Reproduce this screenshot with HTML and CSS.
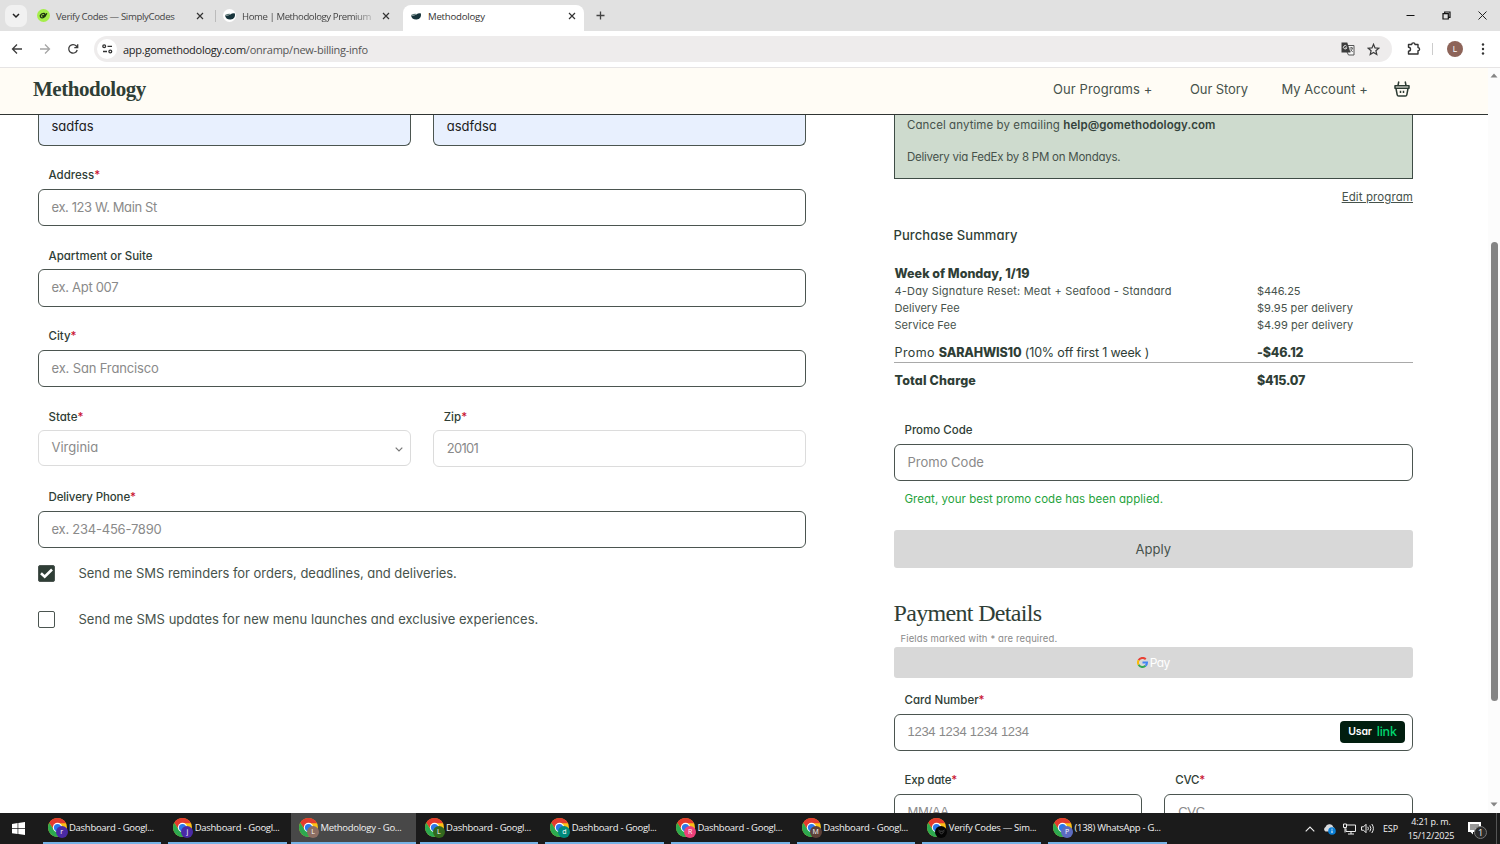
FILE: index.html
```html
<!DOCTYPE html>
<html lang="en">
<head>
    <meta charset="UTF-8">
    <meta name="viewport" content="width=device-width, initial-scale=1.0">
    <title>Methodology</title>
    <link rel="stylesheet" href="styles.css">
</head>
<body>

    <!-- Shared icons -->
    <svg class="defs" width="0" height="0">
        <symbol id="chrome" viewBox="0 0 20 20">
            <circle cx="10" cy="10" r="10" fill="#fbc116"/>
            <path d="M10 5.4H18.9A10 10 0 0 0 1.34 5L6 12.3Z" fill="#e33b2e"/>
            <path d="M1.34 5A10 10 0 0 0 10 20L14 12.3L6 12.3Z" fill="#2da94f"/>
            <circle cx="10" cy="10" r="4.9" fill="#fff"/>
            <circle cx="10" cy="10" r="3.8" fill="#2b78ea"/>
        </symbol>
        <symbol id="close" viewBox="0 0 8 8">
            <path d="M1 1L7 7M7 1L1 7" fill="none" stroke="currentColor" stroke-width="1.2"/>
        </symbol>
        <symbol id="bowl" viewBox="0 0 12 12">
            <path d="M1 5.2Q4 6 6.3 4.6Q8.5 2.6 11 3.4Q11.6 8.8 6.6 9.4Q1.6 9.6 1 5.2Z" fill="#17343b"/>
            <path d="M1 5Q4 3.4 7 4Q4 6 1 5Z" fill="#5d7776"/>
        </symbol>
    </svg>

    <!-- Browser tabs -->
    <div class="tab-strip">
        <div class="tab-search">
            <svg width="8" height="6" viewBox="0 0 8 6"><path d="M1 1L4 4L7 1" fill="none" stroke="#222" stroke-width="1.5"/></svg>
        </div>
        <div class="tab tab-first">
            <svg width="13" height="13" viewBox="0 0 13 13"><circle cx="6.5" cy="6.5" r="6.5" fill="#a5ee4b"/><path d="M8.2 4.6Q4.5 3.6 3.3 6.600Q3.200 9.400 6 8.700Q8.400 7.600 9.800 4.200M4.800 6.500L6.200 7.400L8.300 5" fill="none" stroke="#1d3210" stroke-width="1.3"/></svg>
            <span class="tab-title">Verify Codes — SimplyCodes</span>
            <svg class="tab-close" width="8" height="8"><use href="#close"/></svg>
        </div>
        <div class="tab tab-second">
            <span class="favicon"><svg width="12" height="12"><use href="#bowl"/></svg></span>
            <span class="tab-title tab-fade">Home | Methodology Premium</span>
            <svg class="tab-close" width="8" height="8"><use href="#close"/></svg>
        </div>
        <div class="tab tab-active">
            <span class="favicon"><svg width="12" height="12"><use href="#bowl"/></svg></span>
            <span class="tab-title">Methodology</span>
            <svg class="tab-close" width="8" height="8"><use href="#close"/></svg>
        </div>
        <svg class="new-tab" width="9" height="9" viewBox="0 0 9 9"><path d="M4.5 0.5V8.5M0.5 4.5H8.5" stroke="#444" stroke-width="1.3"/></svg>
        <div class="window-buttons">
            <svg width="9" height="9" viewBox="0 0 9 9"><path d="M0.5 4.5H8.5" stroke="#111"/></svg>
            <svg width="9" height="9" viewBox="0 0 9 9"><path d="M1 2.7H6.3V8H1ZM2.7 2.7V1H8V6.3H6.3" fill="none" stroke="#111" stroke-width="1.2"/></svg>
            <svg width="9" height="9" viewBox="0 0 9 9"><path d="M0.5 0.5L8.5 8.5M8.5 0.5L0.5 8.5" stroke="#222"/></svg>
        </div>
    </div>

    <!-- Browser toolbar -->
    <div class="toolbar">
        <svg width="12" height="12" viewBox="0 0 12 12"><path d="M11 6H2M6 1.5L1.5 6L6 10.5" fill="none" stroke="#3c3c3c" stroke-width="1.3"/></svg>
        <svg width="12" height="12" viewBox="0 0 12 12"><path d="M1 6H10M6 1.5L10.5 6L6 10.5" fill="none" stroke="#a6a6a6" stroke-width="1.3"/></svg>
        <svg width="12" height="12" viewBox="0 0 12 12"><path d="M10.2 7A4.3 4.3 0 1 1 9.3 3L10.6 4.5M10.7 1.2V4.6H7.3" fill="none" stroke="#3c3c3c" stroke-width="1.3"/></svg>
        <div class="address-bar">
            <span class="site-info">
                <svg width="11" height="10" viewBox="0 0 11 10" fill="none" stroke="#333" stroke-width="1.3"><circle cx="2.2" cy="2.3" r="1.4"/><path d="M5.5 2.3H10M1 7.5H5"/><circle cx="8.3" cy="7.5" r="1.4"/></svg>
            </span>
            <span class="url"><span class="url-host">app.gomethodology.com</span>/onramp/new-billing-info</span>
            <svg class="translate" width="14" height="14" viewBox="0 0 14 14"><path d="M6 3.5H13V13H7.5L6 10" fill="#f5f5f5" stroke="#555"/><path d="M0.5 0.5H6.300L9.500 10.500H0.500Z" fill="#3c3c3c"/><path d="M5.600 4.300A1.700 1.700 0 1 0 5.800 5.800H4.300" fill="none" stroke="#fff" stroke-width="0.900"/><path d="M8.500 6H12M10.300 5V6M11.500 6Q11 8.500 9.200 9.500M9.500 7.500L11.700 10" fill="none" stroke="#555" stroke-width="0.900"/></svg>
            <svg class="star" width="13" height="13" viewBox="0 0 13 13"><path d="M6.5 1.3L8 4.9L11.8 5.2L8.9 7.7L9.8 11.5L6.5 9.5L3.2 11.5L4.1 7.7L1.2 5.2L5 4.9Z" fill="none" stroke="#3c3c3c" stroke-width="1.2"/></svg>
        </div>
        <svg class="puzzle" width="14" height="14" viewBox="0 0 14 14"><path d="M1.5 2.5H4.7A1.6 1.6 0 0 1 8 2.5H11V5.6A1.5 1.5 0 0 1 11 8.7V12H1.5V9.2A2 2 0 0 0 1.5 5.2Z" fill="none" stroke="#333" stroke-width="1.4" stroke-linejoin="round"/></svg>
        <span class="toolbar-line"></span>
        <span class="avatar">L</span>
        <svg class="dots" width="4" height="12" viewBox="0 0 4 12" fill="#333"><circle cx="2" cy="1.5" r="1.2"/><circle cx="2" cy="6" r="1.2"/><circle cx="2" cy="10.5" r="1.2"/></svg>
    </div>

    <!-- Web page -->
    <div class="viewport">
        <div class="page">
            <header class="site-header">
                <div class="logo">Methodology</div>
                <nav class="site-nav">
                    <a class="nav-programs">Our Programs +</a>
                    <a class="nav-story">Our Story</a>
                    <a class="nav-account">My Account +</a>
                    <svg width="16" height="16" viewBox="0 0 16 16" fill="none" stroke="#2c3b33" stroke-width="1.500"><path d="M1 4.800H15V7.200H1Z" stroke-linejoin="round"/><path d="M2 7.500L3.200 13.800Q3.400 15 4.600 15H11.400Q12.600 15 12.800 13.800L14 7.500M4.800 0.500L4 4.500M11.200 0.500L12 4.500"/><path d="M6.500 9.700V12M9.500 9.700V12"/></svg>
                </nav>
            </header>

            <main class="content">
                <!-- Delivery form -->
                <section class="delivery">
                    <div class="row names">
                        <div class="input filled"><span>sadfas</span></div>
                        <div class="input filled"><span>asdfdsa</span></div>
                    </div>
                    <div class="field">
                        <label>Address<i>*</i></label>
                        <div class="input"><span class="t-address">ex. 123 W. Main St</span></div>
                    </div>
                    <div class="field">
                        <label>Apartment or Suite</label>
                        <div class="input"><span class="t-apt">ex. Apt 007</span></div>
                    </div>
                    <div class="field">
                        <label>City<i>*</i></label>
                        <div class="input"><span class="t-city">ex. San Francisco</span></div>
                    </div>
                    <div class="row">
                        <div class="field">
                            <label>State<i>*</i></label>
                            <div class="input disabled select">
                                <span>Virginia</span>
                                <svg width="8" height="5" viewBox="0 0 8 5"><path d="M0.7 0.7L4 4L7.3 0.7" fill="none" stroke="#777" stroke-width="1.2"/></svg>
                            </div>
                        </div>
                        <div class="field">
                            <label>Zip<i>*</i></label>
                            <div class="input disabled"><span class="t-zip">20101</span></div>
                        </div>
                    </div>
                    <div class="field">
                        <label><span class="l-phone">Delivery Phone</span><i>*</i></label>
                        <div class="input"><span class="t-phone">ex. 234-456-7890</span></div>
                    </div>
                    <div class="check-row">
                        <span class="checkbox checked"><svg width="13" height="11" viewBox="0 0 13 11"><path d="M1 5.3L4.7 8.7L12 1.5" fill="none" stroke="#fff" stroke-width="2.6"/></svg></span>
                        <span class="c-reminders">Send me SMS reminders for orders, deadlines, and deliveries.</span>
                    </div>
                    <div class="check-row">
                        <span class="checkbox"></span>
                        <span class="c-updates">Send me SMS updates for new menu launches and exclusive experiences.</span>
                    </div>
                </section>

                <!-- Order summary -->
                <section class="summary">
                    <div class="program">
                        <p class="p-cancel">Cancel anytime by emailing <b>help@gomethodology.com</b></p>
                        <p class="p-delivery">Delivery via FedEx by 8 PM on Mondays.</p>
                    </div>
                    <a class="edit">Edit program</a>
                    <h2>Purchase Summary</h2>
                    <div class="line week"><b>Week of Monday, 1/19</b></div>
                    <div class="line small"><span class="s-item">4-Day Signature Reset: Meat + Seafood - Standard</span><span class="s-price">$446.25</span></div>
                    <div class="line small"><span>Delivery Fee</span><span>$9.95 per delivery</span></div>
                    <div class="line small"><span>Service Fee</span><span>$4.99 per delivery</span></div>
                    <div class="line promo"><span><span class="s-promo">Promo </span><b>SARAHWIS10</b><span class="s-off"> (10% off first 1 week )</span></span><b>-$46.12</b></div>
                    <div class="line total"><b>Total Charge</b><b class="s-total">$415.07</b></div>

                    <div class="promo-form">
                        <label>Promo Code</label>
                        <div class="input"><span>Promo Code</span></div>
                        <p class="success">Great, your best promo code has been applied.</p>
                        <div class="button"><span>Apply</span></div>
                    </div>

                    <h1>Payment Details</h1>
                    <p class="required">Fields marked with * are required.</p>
                    <div class="button gpay">
                        <svg width="11" height="11" viewBox="0 0 22 22" fill="none" stroke-width="4">
                            <path d="M17.5 4.5A9 9 0 0 0 3.2 6.5" stroke="#e94235"/>
                            <path d="M3.2 6.5A9 9 0 0 0 3.2 15.5" stroke="#fabb05"/>
                            <path d="M3.2 15.5A9 9 0 0 0 17 17.7" stroke="#34a853"/>
                            <path d="M17 17.7A9 9 0 0 0 20 11H11" stroke="#4285f4"/>
                        </svg>
                        <span>Pay</span>
                    </div>
                    <div class="field card">
                        <label>Card Number<i>*</i></label>
                        <div class="input">
                            <span class="t-card">1234 1234 1234 1234</span>
                            <span class="link-button">Usar <em>link</em></span>
                        </div>
                    </div>
                    <div class="row">
                        <div class="field">
                            <label><span class="l-exp">Exp date</span><i>*</i></label>
                            <div class="input"><span class="t-exp">MM/AA</span></div>
                        </div>
                        <div class="field">
                            <label><span class="l-exp">CVC</span><i>*</i></label>
                            <div class="input"><span class="t-cvc">CVC</span></div>
                        </div>
                    </div>
                </section>
            </main>
        </div>

        <!-- Scrollbar -->
        <div class="scrollbar">
            <svg width="8" height="5" viewBox="0 0 8 5"><path d="M0.5 4.5L4 0.5L7.5 4.5Z" fill="#858585"/></svg>
            <span class="thumb"></span>
            <svg width="8" height="5" viewBox="0 0 8 5"><path d="M0.5 0.5L4 4.5L7.5 0.5Z" fill="#858585"/></svg>
        </div>
    </div>

    <!-- Taskbar -->
    <div class="taskbar">
        <div class="start"><svg width="13" height="13" viewBox="0 0 13 13" fill="#fff"><path d="M0 1.9L5.6 1.1V6.2H0ZM6.3 1L13 0V6.2H6.3ZM0 6.9H5.6V12L0 11.2ZM6.3 6.9H13V13L6.3 12.1Z"/></svg></div>
        <div class="task"><span class="task-icon"><svg width="19" height="19"><use href="#chrome"/></svg><b class="badge purple">r</b></span><span>Dashboard - Googl...</span></div>
        <div class="task"><span class="task-icon"><svg width="19" height="19"><use href="#chrome"/></svg><b class="badge purple">j</b></span><span>Dashboard - Googl...</span></div>
        <div class="task active"><span class="task-icon"><svg width="19" height="19"><use href="#chrome"/></svg><b class="badge brown">L</b></span><span>Methodology - Go...</span></div>
        <div class="task"><span class="task-icon"><svg width="19" height="19"><use href="#chrome"/></svg><b class="badge green">L</b></span><span>Dashboard - Googl...</span></div>
        <div class="task"><span class="task-icon"><svg width="19" height="19"><use href="#chrome"/></svg><b class="badge teal">d</b></span><span>Dashboard - Googl...</span></div>
        <div class="task"><span class="task-icon"><svg width="19" height="19"><use href="#chrome"/></svg><b class="badge pink">R</b></span><span>Dashboard - Googl...</span></div>
        <div class="task"><span class="task-icon"><svg width="19" height="19"><use href="#chrome"/></svg><b class="badge coffee">M</b></span><span>Dashboard - Googl...</span></div>
        <div class="task"><span class="task-icon"><svg width="19" height="19"><use href="#chrome"/></svg><b class="badge black"><svg width="7" height="6" viewBox="0 0 7 6"><path d="M0.5 1L2 2.2H5L6.5 1M1 2.5L3.5 5.2L6 2.5" fill="none" stroke="#555" stroke-width="0.8"/></svg></b></span><span>Verify Codes — Sim...</span></div>
        <div class="task"><span class="task-icon"><svg width="19" height="19"><use href="#chrome"/></svg><b class="badge blue">P</b></span><span>(138) WhatsApp - G...</span></div>

        <div class="tray">
            <svg width="10" height="6" viewBox="0 0 10 6"><path d="M0.7 5.3L5 1L9.3 5.3" fill="none" stroke="#eee" stroke-width="1.1"/></svg>
            <svg class="cloud" width="13" height="12" viewBox="0 0 13 12"><path d="M2.5 8.5A2.5 2.5 0 0 1 2.5 4Q3.5 1 6.5 1.3Q9.5 1 10.3 4Q12.5 5 11.5 8.5Z" fill="#d7dade"/><circle cx="9" cy="8" r="3.8" fill="#0a7fd6"/><path d="M9 7.5V10M9 5.7V6.7" stroke="#fff"/></svg>
            <svg class="network" width="13" height="12" viewBox="0 0 13 12" fill="none" stroke="#eee"><path d="M4 2H12.5V8.5H3V5.5M5 11H11M8 8.5V11M0.5 1H3.5V4.5H0.5ZM2 4.5V9.5"/></svg>
            <svg class="sound" width="14" height="11" viewBox="0 0 14 11" fill="none" stroke="#eee"><path d="M0.5 3.8H2.5L5 1.3V9.7L2.5 7.2H0.5ZM6.8 3.8Q8 5.5 6.8 7.2M8.8 2.5Q11 5.5 8.8 8.5M10.8 1Q14 5.5 10.8 10"/></svg>
            <span class="language">ESP</span>
            <div class="clock"><span>4:21 p. m.</span><span>15/12/2025</span></div>
            <div class="notice"><svg width="13" height="13" viewBox="0 0 13 13"><path d="M0 0H13V10H5V12.5L2.5 10H0Z" fill="#fff"/><path d="M2 3H11M2 5H11M2 7H7" stroke="#1b1b1b" stroke-width="0.9"/></svg><b>1</b></div>
            <span class="show-desktop"></span>
        </div>
    </div>

</body>
</html>
```
FILE: styles.css
```css
/* General Styles */
* {
    box-sizing: border-box;
}

body {
    margin: 0;
    width: 1500px;
    height: 844px;
    overflow: hidden;
    background-color: #fff;
    font-family: Inter, "Liberation Sans", sans-serif;
    font-feature-settings: "cv11";
    color: #2f3e36;
    display: flex;
    flex-direction: column;
    white-space: nowrap;
}

h1, h2, p {
    margin: 0;
}

svg {
    display: block;
    flex: none;
}

.defs {
    position: absolute;
}

/* Tabs */
.tab-strip {
    height: 31px;
    flex: none;
    display: flex;
    align-items: center;
    background-color: #e1e1e1;
    font-family: "Open Sans", sans-serif;
    font-size: 9.6px;
    letter-spacing: -0.35px;
    color: #444;
}

.tab-search {
    width: 22px;
    height: 22px;
    margin-left: 5px;
    border-radius: 7px;
    background-color: #f1f1f1;
    display: flex;
    align-items: center;
    justify-content: center;
}

.tab {
    display: flex;
    align-items: center;
    height: 26px;
}

.tab-first {
    width: 178px;
    margin-left: 10px;
    padding-right: 11px;
}

.tab-second {
    width: 188px;
    height: 12px;
    border-left: 1px solid #bbb;
    padding: 0 13px 0 7px;
}

.tab-active {
    width: 181px;
    height: 26px;
    margin: 5px 0 0;
    padding: 0 8px 4px 6px;
    background-color: #fff;
    border-radius: 8px 8px 0 0;
    color: #333;
}

.favicon {
    width: 13px;
    height: 13px;
    border-radius: 50%;
    background-color: #fff;
    display: flex;
    align-items: center;
    justify-content: center;
}

.tab-title {
    margin-left: 6px;
    padding-top: 1px;
}

.tab-active .tab-title {
    letter-spacing: -0.2px;
    padding-top: 0;
}

.tab-fade {
    letter-spacing: -0.42px;
    mask-image: linear-gradient(to right, #000 85%, rgba(0, 0, 0, 0.3));
}

.tab-close {
    margin-left: auto;
    color: #333;
}

.new-tab {
    margin-left: 12px;
}

.window-buttons {
    display: flex;
    gap: 27px;
    margin-left: auto;
    margin-right: 13.5px;
}

/* Toolbar */
.toolbar {
    height: 37px;
    flex: none;
    display: flex;
    align-items: center;
    padding-left: 11px;
    border-bottom: 1px solid #e6e4e4;
    gap: 16px;
}

.address-bar {
    width: 1298px;
    height: 26px;
    margin-left: -1px;
    padding-left: 3px;
    border-radius: 13px;
    background-color: #eeecec;
    display: flex;
    align-items: center;
}

.site-info {
    width: 20px;
    height: 20px;
    border-radius: 50%;
    background-color: #fff;
    display: flex;
    align-items: center;
    justify-content: center;
}

.url {
    margin-left: 6px;
    font-family: "Open Sans", sans-serif;
    font-size: 11px;
    letter-spacing: -0.24px;
    color: #555;
}

.url-host {
    color: #222;
}

.translate {
    margin-left: auto;
}

.star {
    margin: 0 12px;
}

.toolbar .puzzle {
    margin-left: -1px;
}

.toolbar-line {
    width: 1px;
    height: 12px;
    background-color: #ccc;
    margin-left: -5px;
}

.avatar {
    width: 16px;
    height: 16px;
    margin-left: -2px;
    border-radius: 50%;
    background-color: #8d6459;
    color: #fff;
    font-size: 8px;
    line-height: 16px;
    text-align: center;
}

.dots {
    margin-left: 2px;
}

/* Web page */
.viewport {
    height: 745px;
    flex: none;
    display: flex;
}

.page {
    width: 1488px;
    height: 745px;
    overflow: hidden;
}

.site-header {
    height: 47px;
    padding: 0 78.5px 4px 33px;
    display: flex;
    align-items: center;
    justify-content: space-between;
    background-color: #fffcf5;
    border-bottom: 1px solid #303533;
}

.logo {
    font-family: "Liberation Serif", serif;
    font-weight: bold;
    font-size: 21px;
    letter-spacing: -0.45px;
}

.site-nav {
    display: flex;
    align-items: center;
    font-size: 13px;
    color: #46524b;
}

.nav-programs {
    width: 137px;
    letter-spacing: 0.1px;
}

.nav-story {
    width: 91.5px;
    letter-spacing: -0.1px;
}

.nav-account {
    width: 112px;
}

.content {
    display: flex;
    justify-content: space-between;
    padding: 0 75px 0 37.5px;
}

/* Form fields */
.delivery {
    width: 768.5px;
}

.row {
    display: flex;
    gap: 22px;
}

.row > * {
    flex: 1;
}

.field {
    padding-top: 19.5px;
    height: 80.5px;
}

label {
    display: block;
    height: 20px;
    margin: 0 0 3.5px 11px;
    line-height: 20px;
    font-size: 11.5px;
    font-weight: 500;
}

label i {
    font-style: normal;
    color: #c8102e;
}

.input {
    display: flex;
    align-items: center;
    height: 37.5px;
    padding: 0 13px 1px;
    border: 1px solid #4b5550;
    border-radius: 6px;
    font-size: 13px;
    color: #8a8a8a;
}

.input.filled {
    height: 30.5px;
    padding-bottom: 8px;
    border-top: none;
    border-radius: 0 0 6px 6px;
    background-color: #e8f0fe;
    color: #1c1c1c;
}

.input.disabled {
    height: 37px;
    padding-bottom: 2px;
    border-color: #dcdcdc;
}

.input.select {
    height: 36px;
    justify-content: space-between;
    padding-right: 7px;
}

.select svg {
    margin-top: 5px;
}

/* Text fitting */
.t-address { letter-spacing: -0.4px; }
.t-apt { letter-spacing: -0.3px; }
.t-city { letter-spacing: -0.15px; }
.t-zip { letter-spacing: -0.7px; }
.t-phone { letter-spacing: -0.23px; }
.l-phone { letter-spacing: -0.12px; }
.l-exp { letter-spacing: -0.2px; }
.c-reminders { letter-spacing: -0.04px; }
.c-updates { letter-spacing: 0.02px; }

.check-row {
    display: flex;
    align-items: center;
    height: 17px;
    margin-top: 16.5px;
    font-size: 13px;
    color: #46524b;
}

.check-row span:last-child {
    padding-bottom: 1px;
}

.check-row + .check-row {
    margin-top: 29px;
}

.checkbox {
    width: 17px;
    height: 17px;
    margin-right: 24px;
    border: 1px solid #4b5550;
    border-radius: 2px;
    display: flex;
    align-items: center;
    justify-content: center;
}

.checkbox.checked {
    background-color: #2f3e36;
}

/* Summary */
.summary {
    width: 519.5px;
}

.program {
    height: 63.5px;
    padding: 0 12.5px;
    border: 1px solid #3e4c45;
    border-top: none;
    background-color: #cedbce;
    font-size: 11.5px;
    color: #46524b;
}

.program p {
    height: 20px;
    line-height: 20px;
    margin-bottom: 12px;
}

.program b {
    font-weight: 600;
    color: #34423b;
}

.p-cancel {
    letter-spacing: 0.08px;
}

.p-delivery {
    letter-spacing: -0.24px;
}

.edit {
    display: block;
    height: 20px;
    margin-top: 8.5px;
    line-height: 20px;
    font-size: 11.5px;
    letter-spacing: 0.1px;
    text-align: right;
    text-decoration: underline;
    color: #46524b;
}

h2 {
    height: 20px;
    margin-top: 18px;
    line-height: 20px;
    font-size: 13px;
    font-weight: 500;
    letter-spacing: 0.1px;
}

.line {
    display: grid;
    grid-template-columns: 362.5px 1fr;
    padding-left: 1px;
    height: 17px;
    line-height: 17px;
    font-size: 12.5px;
}

.line b {
    font-weight: 800;
}

.line.week {
    height: 18px;
    margin-top: 20px;
}

.line.small {
    font-size: 11px;
    letter-spacing: 0.05px;
    color: #46524b;
}

.line .s-item {
    letter-spacing: 0.19px;
}

.line .s-price {
    letter-spacing: -0.15px;
}

.line.promo {
    height: 20px;
    margin-top: 9px;
    border-bottom: 1px solid #a9a9a9;
    line-height: 20px;
}

.promo .s-promo {
    letter-spacing: 0.4px;
}

.promo .s-off {
    letter-spacing: -0.15px;
}

.promo b {
    letter-spacing: -0.15px;
}

.line.total {
    height: 20px;
    margin-top: 8px;
    line-height: 20px;
    letter-spacing: 0.15px;
}

.line .s-total {
    letter-spacing: -0.2px;
}

.promo-form {
    margin-top: 29px;
}

.success {
    height: 20px;
    margin: 8px 0 0 11px;
    line-height: 20px;
    font-size: 11.5px;
    letter-spacing: 0.03px;
    color: #1fa33c;
}

.button {
    height: 38px;
    margin-top: 21px;
    border-radius: 3px;
    background-color: #d8d8d8;
    display: flex;
    align-items: center;
    justify-content: center;
    font-size: 13px;
    color: #46524b;
}

h1 {
    height: 30px;
    margin-top: 30px;
    line-height: 30px;
    font-family: "Liberation Serif", serif;
    font-size: 24px;
    font-weight: normal;
    letter-spacing: -0.67px;
}

.required {
    height: 14px;
    margin: 4px 0 1px 7px;
    line-height: 14px;
    font-size: 9.5px;
    letter-spacing: 0.12px;
    color: #8a8a8a;
}

.gpay {
    height: 31px;
    margin-top: 0;
    gap: 2px;
    font-size: 12px;
    letter-spacing: -0.6px;
    color: #fff;
}

.card {
    padding-top: 12px;
    height: 72.5px;
}

.card .input {
    justify-content: space-between;
    padding-right: 7px;
}

.t-card, .t-exp, .t-cvc {
    font-family: "Liberation Sans", sans-serif;
    letter-spacing: -0.28px;
}

.link-button {
    width: 65px;
    height: 22px;
    border-radius: 4px;
    background-color: #011e0f;
    font-size: 10.5px;
    font-weight: 600;
    letter-spacing: -0.2px;
    color: #fff;
    display: flex;
    align-items: center;
    justify-content: center;
    gap: 5px;
}

.link-button em {
    font-style: normal;
    font-size: 12.5px;
    font-weight: 500;
    color: #00d66f;
}

/* Scrollbar */
.scrollbar {
    width: 12px;
    display: flex;
    flex-direction: column;
    align-items: center;
    padding: 5px 0 6px;
    background-color: #fcfcfc;
}

.thumb {
    width: 7px;
    height: 459px;
    margin: 164px 0 auto;
    border-radius: 4px;
    background-color: #858585;
}

/* Taskbar */
.taskbar {
    height: 31px;
    flex: none;
    display: flex;
    background-color: #1b1b1b;
    color: #f2f2f2;
    font-family: "Open Sans", sans-serif;
    font-size: 9.5px;
    letter-spacing: -0.28px;
}

.start {
    width: 39px;
    padding: 9px 0 0 12px;
}

.task {
    width: 118.7px;
    margin: 0 3.5px;
    padding-left: 5px;
    display: flex;
    align-items: center;
    gap: 2.5px;
    border-bottom: 2px solid #76b3e6;
}

.task.active {
    width: 124.7px;
    margin: 0 0.5px;
    padding-left: 8px;
    background-color: #484848;
}

.task-icon {
    position: relative;
}

.badge {
    position: absolute;
    left: 8px;
    top: 8px;
    width: 12px;
    height: 12px;
    border-radius: 50%;
    font-size: 7px;
    font-weight: normal;
    line-height: 12px;
    text-align: center;
    color: #fff;
}

.purple { background-color: #4a2aa5; }
.brown { background-color: #8d6e63; }
.green { background-color: #33691e; }
.teal { background-color: #00897b; }
.pink { background-color: #ec407a; }
.coffee { background-color: #5d4037; }
.blue { background-color: #5c6bc0; }

.black {
    background-color: #050505;
    display: flex;
    align-items: center;
    justify-content: center;
}

.tray {
    display: flex;
    align-items: center;
    margin-left: auto;
    font-size: 9px;
    letter-spacing: -0.15px;
}

.cloud {
    margin-left: 8px;
}

.network {
    margin-left: 7px;
}

.sound {
    margin-left: 5px;
}

.language {
    width: 24px;
    margin-left: 8px;
}

.clock {
    width: 48px;
    display: flex;
    flex-direction: column;
    align-items: center;
    line-height: 14px;
}

.notice {
    position: relative;
    margin: 0 10px 0 13px;
}

.notice b {
    position: absolute;
    left: 6px;
    top: 4px;
    width: 13px;
    height: 13px;
    border: 1px solid #777;
    border-radius: 50%;
    background-color: #2a2a2a;
    font-size: 9px;
    font-weight: normal;
    line-height: 11px;
    text-align: center;
}

.show-desktop {
    width: 4px;
    height: 31px;
    margin-left: 5px;
    border-left: 1px solid #555;
}
```
